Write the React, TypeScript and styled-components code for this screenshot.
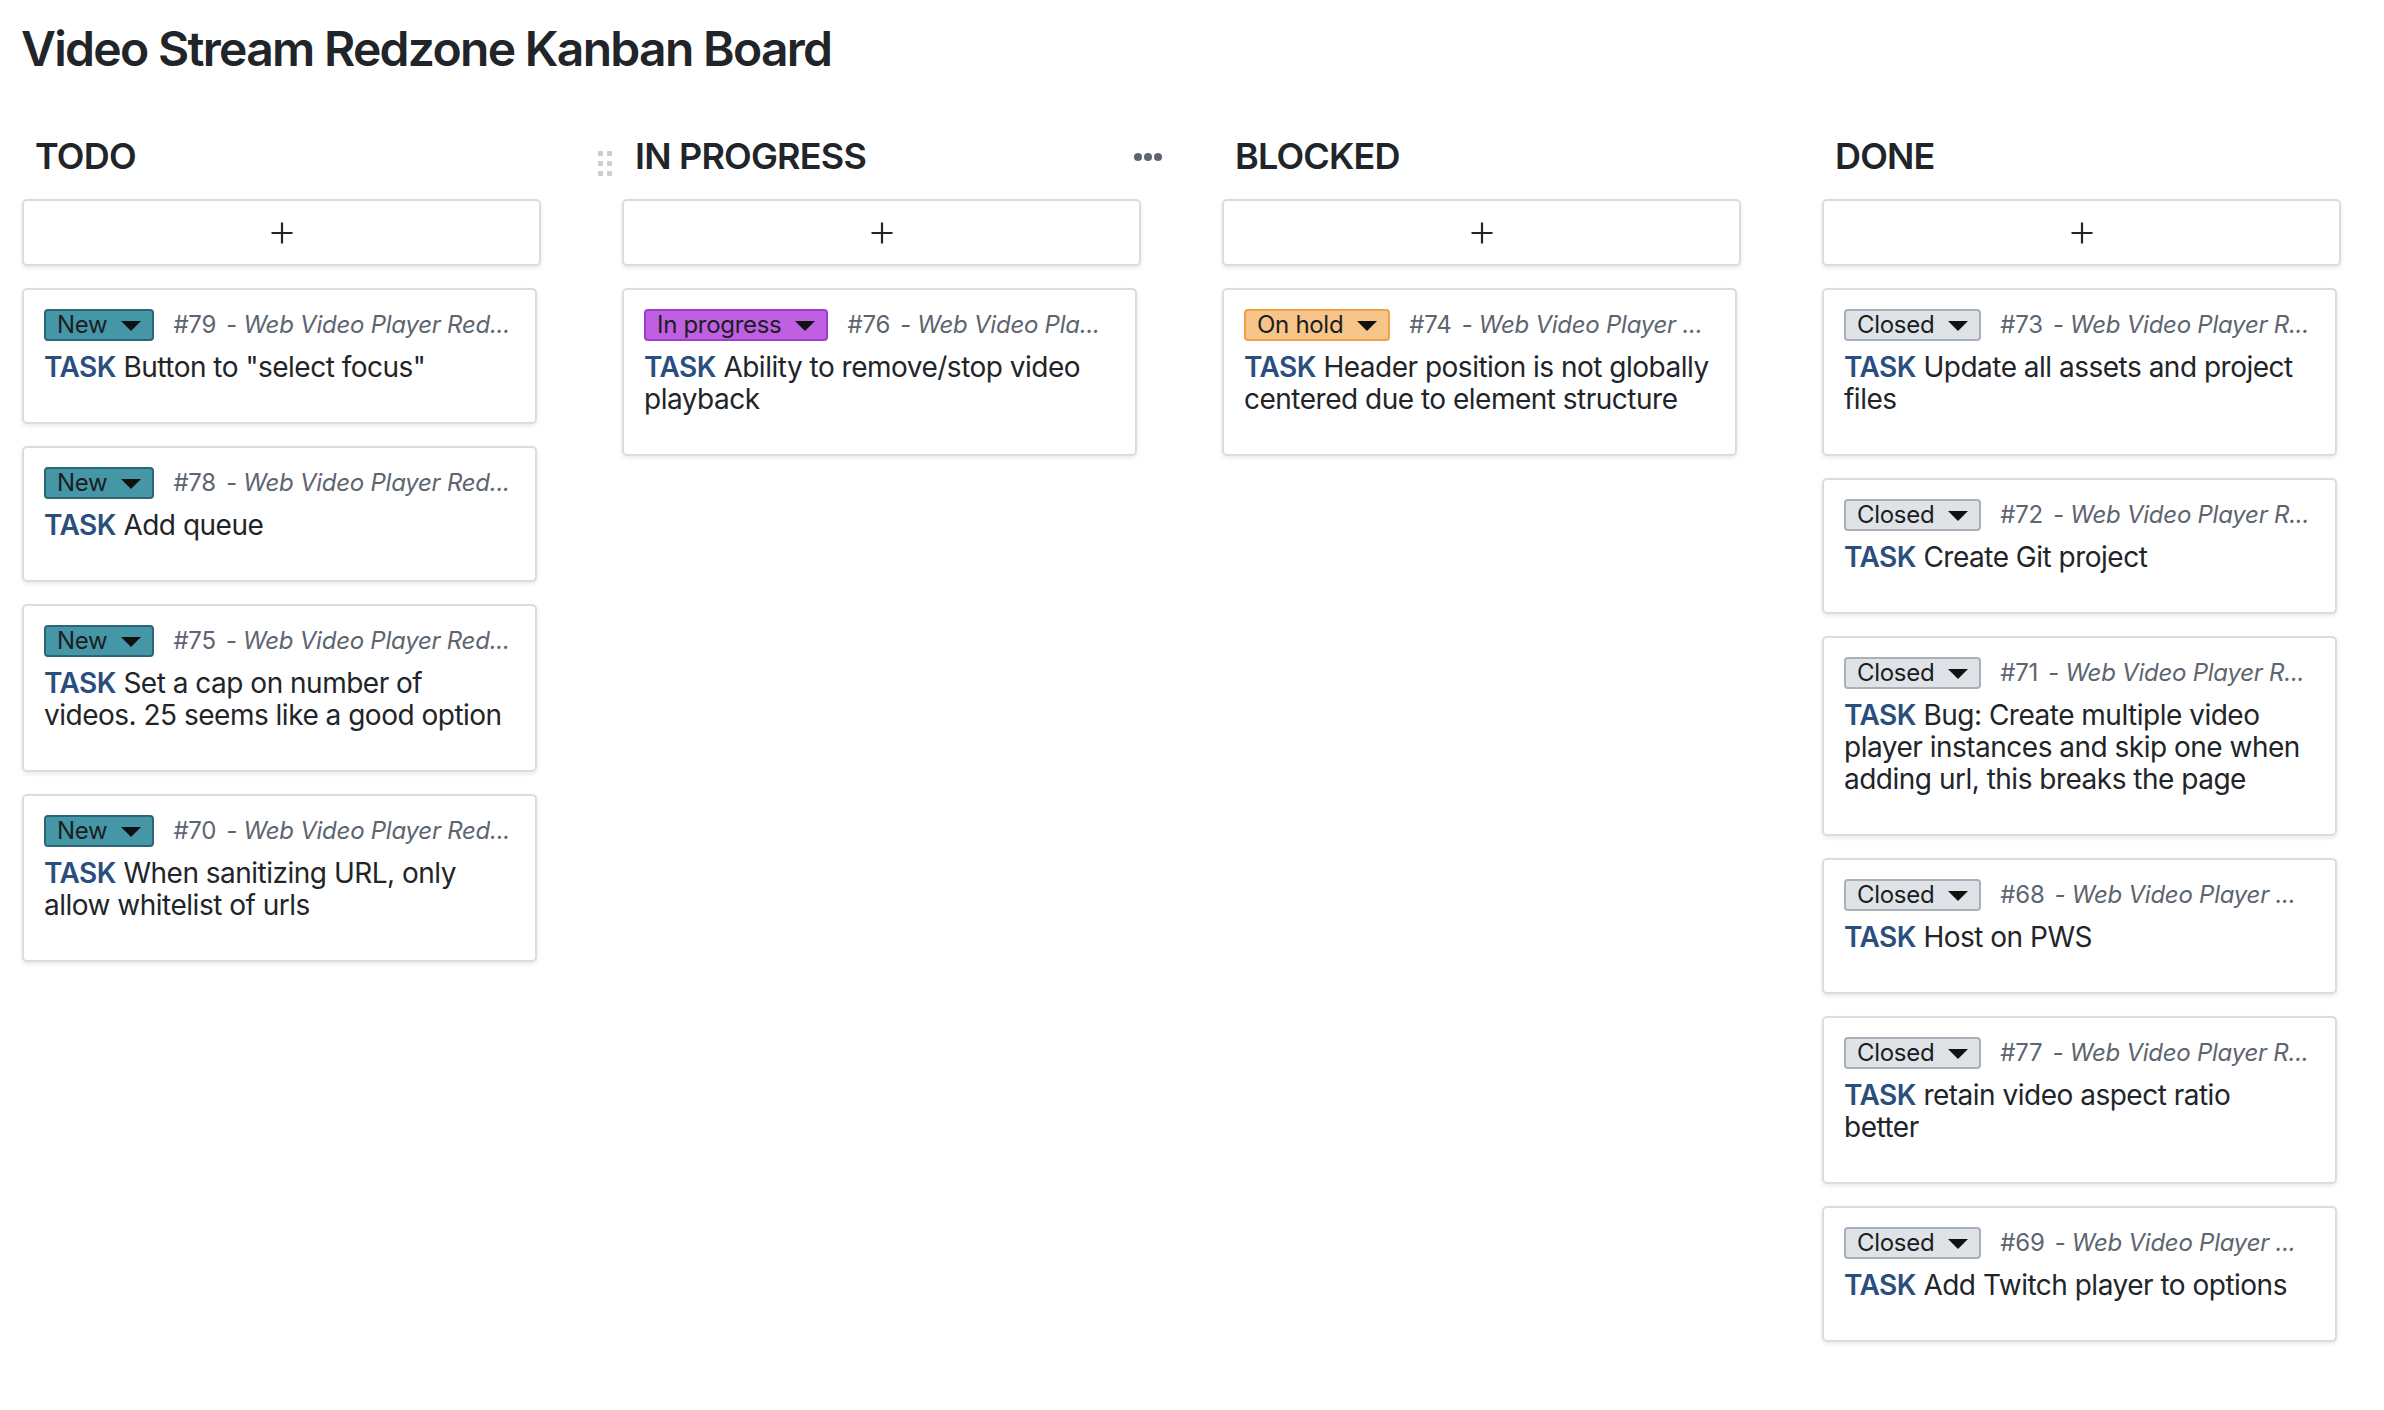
import React from "react";
import styled, { createGlobalStyle, css } from "styled-components";

const GlobalStyle = createGlobalStyle`
  html, body {
    margin: 0;
    padding: 0;
    background: #ffffff;
  }
  body {
    font-family: Inter, "Noto Sans", "Liberation Sans", sans-serif;
    color: #212529;
    -webkit-font-smoothing: antialiased;
  }
  * { box-sizing: border-box; }
`;

type Status = "new" | "progress" | "hold" | "closed";

interface Task {
  id: number;
  status: Status;
  project: string;
  title: string;
}

interface ColumnData {
  name: string;
  hovered?: boolean;
  tasks: Task[];
}

const statusLabel: Record<Status, string> = {
  new: "New",
  progress: "In progress",
  hold: "On hold",
  closed: "Closed",
};

const statusColors: Record<Status, { bg: string; border: string }> = {
  new: { bg: "#4597a8", border: "#2a6673" },
  progress: { bg: "#bf5fe2", border: "#9f3cc9" },
  hold: { bg: "#f7c489", border: "#f0a048" },
  closed: { bg: "#dfe3e8", border: "#a8b0b9" },
};

const columns: ColumnData[] = [
  {
    name: "TODO",
    tasks: [
      { id: 79, status: "new", project: "Web Video Player Red...", title: 'Button to "select focus"' },
      { id: 78, status: "new", project: "Web Video Player Red...", title: "Add queue" },
      { id: 75, status: "new", project: "Web Video Player Red...", title: "Set a cap on number of videos. 25 seems like a good option" },
      { id: 70, status: "new", project: "Web Video Player Red...", title: "When sanitizing URL, only allow whitelist of urls" },
    ],
  },
  {
    name: "IN PROGRESS",
    hovered: true,
    tasks: [
      { id: 76, status: "progress", project: "Web Video Pla...", title: "Ability to remove/stop video playback" },
    ],
  },
  {
    name: "BLOCKED",
    tasks: [
      { id: 74, status: "hold", project: "Web Video Player ...", title: "Header position is not globally centered due to element structure" },
    ],
  },
  {
    name: "DONE",
    tasks: [
      { id: 73, status: "closed", project: "Web Video Player R...", title: "Update all assets and project files" },
      { id: 72, status: "closed", project: "Web Video Player R...", title: "Create Git project" },
      { id: 71, status: "closed", project: "Web Video Player R...", title: "Bug: Create multiple video player instances and skip one when adding url, this breaks the page" },
      { id: 68, status: "closed", project: "Web Video Player ...", title: "Host on PWS" },
      { id: 77, status: "closed", project: "Web Video Player R...", title: "retain video aspect ratio better" },
      { id: 69, status: "closed", project: "Web Video Player ...", title: "Add Twitch player to options" },
    ],
  },
];

const Page = styled.div`
  padding: 20px 22px 40px 22px;
`;

const Title = styled.h1`
  margin: 0 0 0 -1px;
  font-size: 48px;
  line-height: 57px;
  font-weight: 600;
  letter-spacing: -1.7px;
  color: #212529;
`;

const Board = styled.div`
  display: grid;
  grid-template-columns: repeat(4, 519px);
  column-gap: 81px;
  margin-top: 58px;
  align-items: start;
`;

const Column = styled.section`
  display: flex;
  flex-direction: column;
`;

const ColumnHeader = styled.div`
  position: relative;
  height: 43px;
  margin-bottom: 21px;
  display: flex;
  align-items: center;
`;

const ColumnTitle = styled.h2`
  margin: 0;
  padding-left: 13px;
  font-size: 36px;
  line-height: 43px;
  font-weight: 600;
  letter-spacing: -0.8px;
  color: #212529;
`;

const DragHandle = styled.div`
  position: absolute;
  left: -24px;
  top: 16px;
  display: grid;
  grid-template-columns: repeat(2, 5px);
  grid-auto-rows: 5px;
  column-gap: 4px;
  row-gap: 5px;

  span {
    background: #cdcdcd;
    border-radius: 1px;
  }
`;

const MenuDots = styled.div`
  position: absolute;
  right: -21px;
  top: 18px;
  display: flex;
  gap: 2px;

  span {
    width: 8px;
    height: 8px;
    border-radius: 50%;
    background: #5e6670;
  }
`;

const AddButton = styled.button`
  height: 67px;
  width: 100%;
  border: 2px solid #d8dde3;
  border-radius: 5px;
  background: #ffffff;
  box-shadow: 0 2px 4px rgba(33, 37, 41, 0.1);
  display: flex;
  align-items: center;
  justify-content: center;
  padding: 0;
  margin-bottom: 22px;
  cursor: pointer;
`;

const CardList = styled.div`
  display: flex;
  flex-direction: column;
  gap: 22px;
`;

const Card = styled.article`
  width: 515px;
  border: 2px solid #d8dde3;
  border-radius: 5px;
  background: #ffffff;
  box-shadow: 0 2px 4px rgba(33, 37, 41, 0.1);
  padding: 19px 20px 39px 20px;
`;

const CardHeader = styled.div`
  display: flex;
  align-items: center;
  gap: 19px;
  height: 32px;
`;

const Badge = styled.div<{ $status: Status }>`
  flex: none;
  display: inline-flex;
  align-items: center;
  gap: 14px;
  height: 32px;
  padding: 0 11px 0 11px;
  border-radius: 4px;
  border: 2px solid;
  font-size: 24px;
  line-height: 28px;
  letter-spacing: -0.3px;
  color: #1b1e21;
  ${({ $status }) => css`
    background: ${statusColors[$status].bg};
    border-color: ${statusColors[$status].border};
  `}
`;

const Caret = styled.span`
  width: 0;
  height: 0;
  border-left: 10px solid transparent;
  border-right: 10px solid transparent;
  border-top: 10px solid #111111;
  margin-top: 2px;
`;

const Meta = styled.div`
  flex: 1;
  min-width: 0;
  white-space: nowrap;
  overflow: hidden;
  font-size: 24px;
  line-height: 28px;
  letter-spacing: -0.25px;
  color: #5d6570;
`;

const Ref = styled.span`
  font-style: normal;
`;

const Project = styled.span`
  font-style: italic;
  margin-left: 10px;
`;

const CardTitle = styled.div`
  margin-top: 10px;
  padding-right: 4px;
  font-size: 28px;
  line-height: 32px;
  color: #212529;
  letter-spacing: -0.5px;
`;

const TaskLabel = styled.span`
  color: #2a4f7e;
  font-weight: 600;
`;

const PlusIcon = () => (
  <svg width="22" height="22" viewBox="0 0 22 22" aria-hidden="true">
    <path d="M11 0.5V21.5M0.5 11H21.5" stroke="#212529" strokeWidth="2.2" fill="none" />
  </svg>
);

const TaskCard: React.FC<{ task: Task }> = ({ task }) => (
  <Card>
    <CardHeader>
      <Badge $status={task.status}>
        <span>{statusLabel[task.status]}</span>
        <Caret />
      </Badge>
      <Meta>
        <Ref>#{task.id}</Ref>
        <Project>- {task.project}</Project>
      </Meta>
    </CardHeader>
    <CardTitle>
      <TaskLabel>TASK</TaskLabel> {task.title}
    </CardTitle>
  </Card>
);

const BoardColumn: React.FC<{ column: ColumnData }> = ({ column }) => (
  <Column>
    <ColumnHeader>
      {column.hovered && (
        <DragHandle>
          {Array.from({ length: 6 }).map((_, i) => (
            <span key={i} />
          ))}
        </DragHandle>
      )}
      <ColumnTitle>{column.name}</ColumnTitle>
      {column.hovered && (
        <MenuDots>
          <span />
          <span />
          <span />
        </MenuDots>
      )}
    </ColumnHeader>
    <AddButton aria-label={`Add task to ${column.name}`}>
      <PlusIcon />
    </AddButton>
    <CardList>
      {column.tasks.map((t) => (
        <TaskCard key={t.id} task={t} />
      ))}
    </CardList>
  </Column>
);

export default function App() {
  return (
    <>
      <GlobalStyle />
      <Page>
        <Title>Video Stream Redzone Kanban Board</Title>
        <Board>
          {columns.map((c) => (
            <BoardColumn key={c.name} column={c} />
          ))}
        </Board>
      </Page>
    </>
  );
}
